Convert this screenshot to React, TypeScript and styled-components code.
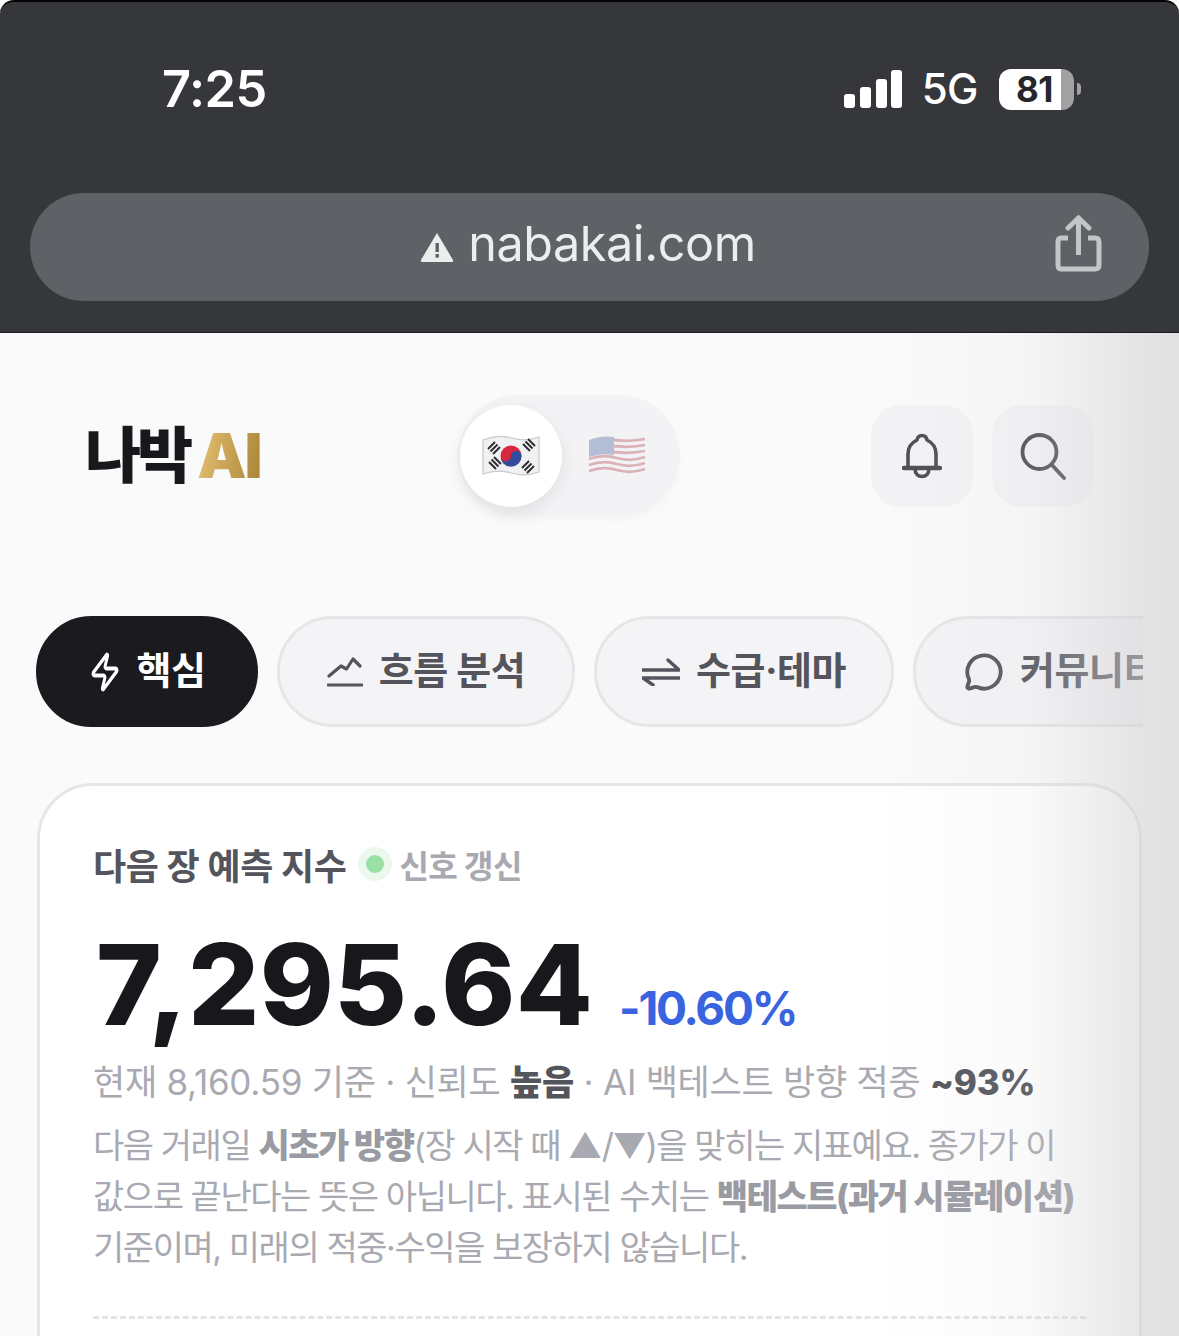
import React from "react";
import styled, { createGlobalStyle } from "styled-components";
import { Zap, MessageCircle } from "lucide-react";

const Global = createGlobalStyle`
  html, body { margin: 0; padding: 0; background: #000; }
  * { box-sizing: border-box; }
`;
const KR = `"Inter", "Noto Sans CJK KR", sans-serif`;

const Screen = styled.div`
  position: relative; width: 1179px; height: 1336px; overflow: hidden;
  background: #fafafa; font-family: ${KR};
`;
const Chrome = styled.header`
  height: 333px; background: #36373b; border-top: 2px solid #050505;
  border-radius: 14px 14px 0 0; border-bottom: 1px solid #1d1d20;
  padding: 0 30px; display: flex; flex-direction: column;
`;
const Status = styled.div`
  height: 191px; display: flex; justify-content: space-between; align-items: flex-start;
  padding: 57px 68px 0 132px;
`;
const Clock = styled.div`
  font: 600 50.5px/60px "Inter", sans-serif; color: #fff; letter-spacing: -0.5px;
`;
const StatusRight = styled.div`
  display: flex; align-items: center; height: 60px; color: #fff;
`;
const Net = styled.span`
  font: 500 42px/60px "Inter", sans-serif; margin: 0 21px 0 20px; letter-spacing: -0.5px;
`;
const Battery = styled.div`
  position: relative; width: 75px; height: 41px; border-radius: 12px; overflow: hidden;
  background: linear-gradient(90deg, #fff 0 62px, #a0a1a3 62px);
  display: flex; align-items: center; padding-left: 17px;
  font: 700 35px/41px "Inter", sans-serif; color: #26272b; letter-spacing: -0.5px;
`;
const BatteryCap = styled.div`
  width: 4px; height: 12px; margin-left: 3px; background: #a0a1a3; border-radius: 0 4px 4px 0;
`;
const Address = styled.div`
  position: relative; height: 108px; border-radius: 54px; background: #5e6165;
  display: flex; align-items: center; justify-content: center; gap: 14px; padding: 0 3px 0 0;
  color: #eceded; font: 400 48.5px/1 "Inter", sans-serif; letter-spacing: -0.4px;
`;
const AddressText = styled.span`
  padding-bottom: 5px;
`;
const ShareSlot = styled.div`
  position: absolute; right: 46px; top: 22px; width: 48px; height: 60px; display: flex;
`;
const Page = styled.main`
  padding: 72px 36px 0; display: flex; flex-direction: column;
`;
const Header = styled.div`
  display: flex; align-items: center; height: 102px; padding-left: 49px; padding-right: 49px;
`;
const Logo = styled.div`
  width: 373px; display: flex; align-items: center; gap: 8px;
  font-weight: 900; font-size: 61px; line-height: 1; letter-spacing: -4px; color: #18181c;
`;
const Gold = styled.span`
  font-family: "Inter", sans-serif; font-weight: 900; font-size: 62px; letter-spacing: -2px;
  background: linear-gradient(100deg, #e6c274, #a98436);
  -webkit-background-clip: text; background-clip: text; color: transparent;
`;
const Toggle = styled.div`
  width: 222px; height: 122px; margin: -10px 0; padding: 10px 0 10px 2px; border-radius: 61px;
  background: #f3f3f6; display: flex; align-items: center; box-shadow: 0 3px 10px rgba(0,0,0,.025);
`;
const FlagBtn = styled.div<{ $on?: boolean }>`
  width: 102px; height: 102px; border-radius: 50%; display: flex; align-items: center; justify-content: center;
  background: ${p => (p.$on ? "#fff" : "transparent")};
  box-shadow: ${p => (p.$on ? "0 6px 18px rgba(0,0,0,.08)" : "none")};
  margin-right: ${p => (p.$on ? "4px" : "0")};
  opacity: ${p => (p.$on ? 1 : 0.4)};
`;
const Actions = styled.div`
  margin-left: auto; display: flex; gap: 19px;
`;
const IconBtn = styled.div`
  width: 102px; height: 102px; border-radius: 30px; background: #f3f3f6; color: #4d4d56;
  display: flex; align-items: center; justify-content: center;
`;
const Tabs = styled.nav`
  margin-top: 109px; height: 111px; width: 1107px; display: flex; gap: 19px; overflow: hidden; flex: none;
`;
const Tab = styled.div<{ $active?: boolean; $w: number }>`
  flex: none; width: ${p => p.$w}px; height: 111px; border-radius: 56px;
  display: flex; align-items: center; justify-content: center; gap: 16px;
  background: ${p => (p.$active ? "#1a1a1f" : "#f4f4f6")};
  border: 3px solid ${p => (p.$active ? "#1a1a1f" : "#e6e6e9")};
  color: ${p => (p.$active ? "#fff" : "#54545c")};
  font-weight: 700; font-size: 38px; letter-spacing: -0.5px; white-space: nowrap;
`;
const CutTab = styled(Tab)`
  justify-content: flex-start; padding-left: 48px;
`;
const TabLabel = styled.span`
  padding-bottom: 9px;
`;
const Card = styled.section`
  margin-top: 56px; margin-left: 1px; width: 1105px; height: 700px; flex: none;
  background: #fff; border: 3px solid #e6e6ea; border-radius: 56px; padding: 52px 53px 0;
`;
const TitleRow = styled.div`
  display: flex; align-items: center; height: 52px;
`;
const Title = styled.h2`
  margin: 0; font-size: 36px; font-weight: 700; color: #54545c; letter-spacing: -0.4px;
`;
const Dot = styled.span`
  width: 18px; height: 18px; border-radius: 50%; background: #9adfa6; margin: 0 15px 0 20px;
  box-shadow: 0 0 0 8px #ecf8ee;
`;
const Live = styled.span`
  font-size: 32px; font-weight: 700; color: #a9a9b1; letter-spacing: -0.6px;
`;
const PriceRow = styled.div`
  display: flex; align-items: baseline; gap: 26px; margin-top: 32px; height: 124px;
`;
const Price = styled.div`
  font: 800 112px/124px "Inter", sans-serif; color: #18181c; letter-spacing: 0.3px; margin-left: 3px;
`;
const Change = styled.div`
  font: 700 46px/1 "Inter", sans-serif; color: #3a63e0; letter-spacing: -2.2px;
`;
const Meta = styled.p`
  margin: 11px 0 0; font-size: 35px; line-height: 50px; color: #a9a9b1; white-space: nowrap; letter-spacing: -0.25px;
`;
const Strong = styled.b`
  font-weight: 800; color: #54545c;
`;
const Note = styled.p`
  margin: 13px 0 0; font-size: 34px; line-height: 51px; color: #a9a9b1; white-space: pre; letter-spacing: -1.45px;
`;
const NoteStrong = styled.b`
  font-weight: 800; color: #9a9aa3;
`;
const Dashed = styled.div`
  margin-top: 43px; border-top: 3px dashed #e4e4e8;
`;
const EdgeShade = styled.div`
  position: absolute; top: 333px; right: 0; bottom: 0; width: 300px; pointer-events: none;
  background: linear-gradient(90deg, rgba(210,210,212,0) 0%, rgba(210,210,212,.12) 50%, rgba(210,210,212,.55) 88%, rgba(210,210,212,.62) 100%);
`;

const Signal = () => (
  <svg width="58" height="38" viewBox="0 0 58 38" fill="#fff">
    <rect x="0" y="24" width="11" height="14" rx="3" />
    <rect x="16" y="17" width="11" height="21" rx="3" />
    <rect x="32" y="9" width="11" height="29" rx="3" />
    <rect x="47" y="0" width="11" height="38" rx="3" />
  </svg>
);
const Warn = () => (
  <svg width="34" height="30" viewBox="0 0 34 30">
    <path d="M17 1 L33 28 Q34 30 31 30 L3 30 Q0 30 1 28 Z" fill="#eceded" />
    <rect x="15.5" y="11" width="3.4" height="9" fill="#5e6165" />
    <rect x="15.5" y="22" width="3.4" height="3.6" fill="#5e6165" />
  </svg>
);
const Share = () => (
  <svg width="48" height="60" viewBox="0 0 48 60" fill="none" stroke="#c4c5c7" strokeWidth="5">
    <path d="M13 23 H6 Q3 23 3 27 V50 Q3 54 6 54 H40 Q44 54 44 50 V27 Q44 23 40 23 H33" />
    <path d="M23.5 40 V5" />
    <path d="M13 13 L23.5 3 L34 13" strokeLinecap="round" />
  </svg>
);
const BellIcon = () => (
  <svg width="40" height="46" viewBox="0 0 40 46" fill="none" stroke="currentColor" strokeWidth="3.6" strokeLinecap="round" strokeLinejoin="round">
    <path d="M6 34 V21 C6 13 11 9 15 7 C16 1 24 1 25 7 C29 9 34 13 34 21 V34" />
    <path d="M2 35 H38" strokeWidth="4.4" />
    <path d="M13 36 C13 46 27 46 27 36" />
  </svg>
);
const SearchIcon = () => (
  <svg width="46" height="48" viewBox="0 0 46 48" fill="none" stroke="currentColor" strokeWidth="3.8" strokeLinecap="round">
    <circle cx="19.5" cy="20" r="17" />
    <path d="M32 33 L44 46" />
  </svg>
);
const KoreaFlag = () => (
  <svg width="60" height="44" viewBox="0 0 60 44">
    <path d="M2 6 Q16 0 30 4 T58 3 V38 Q44 43 30 39 T2 40 Z" fill="#f1f1f3" stroke="#c9c9cc" strokeWidth="1.2" />
    <circle cx="30" cy="22" r="10.5" fill="#d8283f" />
    <path d="M19.5 22 A10.5 10.5 0 0 0 40.5 22 A5.25 5.25 0 0 0 30 22 A5.25 5.25 0 0 1 19.5 22 Z" fill="#2f4d9c" />
    <g stroke="#2b2b2f" strokeWidth="1.9">
      <path d="M7 15 L14 8 M9.5 17.5 L16.5 10.5 M12 20 L19 13" />
      <path d="M42 10 L49 17 M44.5 7.5 L51.5 14.5 M47 5 L54 12" />
      <path d="M8 28 L15 35 M10.5 25.5 L17.5 32.5 M13 23 L20 30" />
      <path d="M41 34 L48 27 M43.5 36.5 L50.5 29.5 M46 39 L53 32" />
    </g>
  </svg>
);
const UsFlag = () => (
  <svg width="60" height="44" viewBox="0 0 60 44" fill="none">
    <path d="M2 6 Q16 0 30 4 T58 3 V38 Q44 43 30 39 T2 40 Z" fill="#f4f2f2" />
    <g stroke="#b5525c" strokeWidth="2.8">
      <path d="M27 6 Q43 8 58 5" /><path d="M27 12 Q43 14 58 11" /><path d="M27 18 Q43 20 58 17" />
      <path d="M2 25 Q16 20 30 24 T58 23" /><path d="M2 31 Q16 26 30 30 T58 29" /><path d="M2 37 Q16 32 30 36 T58 35" />
    </g>
    <path d="M2 6 Q14 1 27 3 V21 Q14 19 2 23 Z" fill="#5670a4" />
  </svg>
);
const FlowIcon = () => (
  <svg width="36" height="30" viewBox="0 0 36 30" fill="none" stroke="currentColor" strokeWidth="3.2" strokeLinecap="round" strokeLinejoin="round">
    <path d="M2 19 L14 9 L19.5 12 L26 2 L33 9" />
    <path d="M1 28 H35" />
  </svg>
);
const SwapIcon = () => (
  <svg width="38" height="28" viewBox="0 0 38 28" fill="none" stroke="currentColor" strokeWidth="3.4" strokeLinecap="round" strokeLinejoin="round">
    <path d="M1 12 H37 L26 2" />
    <path d="M37 20 H1 L11 27" />
  </svg>
);

export default function App() {
  return (
    <Screen>
      <Global />
      <Chrome>
        <Status>
          <Clock>7:25</Clock>
          <StatusRight>
            <Signal />
            <Net>5G</Net>
            <Battery>81</Battery>
            <BatteryCap />
          </StatusRight>
        </Status>
        <Address>
          <Warn />
          <AddressText>nabakai.com</AddressText>
          <ShareSlot><Share /></ShareSlot>
        </Address>
      </Chrome>
      <Page>
        <Header>
          <Logo>나박<Gold>AI</Gold></Logo>
          <Toggle>
            <FlagBtn $on><KoreaFlag /></FlagBtn>
            <FlagBtn><UsFlag /></FlagBtn>
          </Toggle>
          <Actions>
            <IconBtn><BellIcon /></IconBtn>
            <IconBtn><SearchIcon /></IconBtn>
          </Actions>
        </Header>
        <Tabs>
          <Tab $active $w={222}><Zap width={32} height={42} strokeWidth={2.2} preserveAspectRatio="none" /><TabLabel>핵심</TabLabel></Tab>
          <Tab $w={298}><FlowIcon /><TabLabel>흐름 분석</TabLabel></Tab>
          <Tab $w={300}><SwapIcon /><TabLabel>수급·테마</TabLabel></Tab>
          <CutTab $w={320}><MessageCircle size={40} strokeWidth={2.3} /><TabLabel>커뮤니티</TabLabel></CutTab>
        </Tabs>
        <Card>
          <TitleRow>
            <Title>다음 장 예측 지수</Title>
            <Dot />
            <Live>신호 갱신</Live>
          </TitleRow>
          <PriceRow>
            <Price>7,295.64</Price>
            <Change>-10.60%</Change>
          </PriceRow>
          <Meta>현재 8,160.59 기준 · 신뢰도 <Strong>높음</Strong> · AI 백테스트 방향 적중 <Strong>~93%</Strong></Meta>
          <Note>
            다음 거래일 <NoteStrong>시초가 방향</NoteStrong>(장 시작 때 ▲/▼)을 맞히는 지표예요. 종가가 이{"\n"}
            값으로 끝난다는 뜻은 아닙니다. 표시된 수치는 <NoteStrong>백테스트(과거 시뮬레이션)</NoteStrong>{"\n"}
            기준이며, 미래의 적중·수익을 보장하지 않습니다.
          </Note>
          <Dashed />
        </Card>
      </Page>
      <EdgeShade />
    </Screen>
  );
}
